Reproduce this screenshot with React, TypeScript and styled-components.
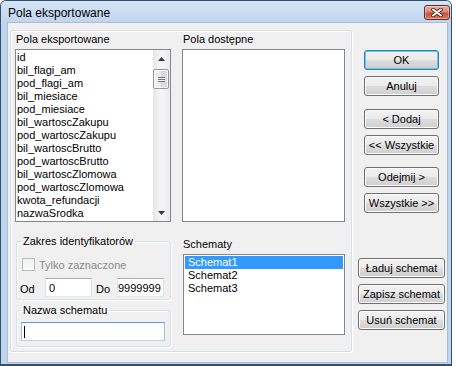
import React from 'react';
import styled, { createGlobalStyle, css } from 'styled-components';

const GlobalStyle = createGlobalStyle`
  html, body {
    margin: 0;
    padding: 0;
    background: #fff;
  }
  body {
    font-family: "Liberation Sans", Arial, sans-serif;
    font-size: 11px;
    color: #000;
  }
  * {
    box-sizing: border-box;
  }
`;

const EXPORTED_FIELDS = [
  'id',
  'bil_flagi_am',
  'pod_flagi_am',
  'bil_miesiace',
  'pod_miesiace',
  'bil_wartoscZakupu',
  'pod_wartoscZakupu',
  'bil_wartoscBrutto',
  'pod_wartoscBrutto',
  'bil_wartoscZlomowa',
  'pod_wartoscZlomowa',
  'kwota_refundacji',
  'nazwaSrodka',
];

const SCHEMAS = ['Schemat1', 'Schemat2', 'Schemat3'];

const Window = styled.div`
  width: 452px;
  height: 366px;
  display: flex;
  flex-direction: column;
  background: #bfd5ee;
  border: 1px solid #34506e;
  border-bottom-width: 2px;
  border-radius: 6px 6px 0 0;
`;

const TitleBar = styled.div`
  height: 22px;
  flex: none;
  display: flex;
  align-items: flex-start;
  padding: 0 1px 0 7px;
  background: linear-gradient(#d4e4f6, #bfd5ee);
  border-radius: 5px 5px 0 0;
`;

const Title = styled.div`
  flex: 1;
  font-size: 12px;
  line-height: 22px;
  padding-top: 1px;
`;

const CloseButton = styled.div`
  width: 26px;
  height: 15px;
  margin-top: 4px;
  border: 1px solid #6b2a1f;
  border-radius: 3px;
  background: linear-gradient(#eab0a3 0%, #d9887a 45%, #c4523c 55%, #d27a66 100%);
  box-shadow: inset 0 0 0 1px rgba(255, 255, 255, 0.35);
  display: flex;
  align-items: center;
  justify-content: center;
`;

const Client = styled.div`
  flex: 1;
  margin: 0 4px 2px 7px;
  background: #f0f0f0;
  box-shadow: 0 0 0 1px #a9bdd4;
  display: flex;
  align-items: flex-start;
`;

const groupBorder = css`
  border: 1px solid #d5dfe5;
  border-radius: 3px;
  box-shadow: inset 1px 1px 0 #fff, 1px 1px 0 #fff;
`;

const MainPanel = styled.div`
  ${groupBorder};
  width: 342px;
  margin: 7px 0 0 2px;
  padding: 2px 6px 4px 4px;
  display: flex;
  gap: 11px;
`;

const Column = styled.div<{ $width: number }>`
  width: ${(p) => p.$width}px;
  display: flex;
  flex-direction: column;
`;

const FieldLabel = styled.div<{ $top?: number }>`
  height: 13px;
  line-height: 13px;
  padding-left: 1px;
  margin-top: ${(p) => p.$top ?? 0}px;
  margin-bottom: 3px;
  white-space: nowrap;
`;

const ListBox = styled.div<{ $height: number; $inset?: number }>`
  height: ${(p) => p.$height}px;
  margin-left: ${(p) => p.$inset ?? 0}px;
  border: 1px solid #828790;
  background: #fff;
  display: flex;
  overflow: hidden;
`;

const ListItems = styled.div`
  flex: 1;
  padding: 1px;
  overflow: hidden;
`;

const ListItem = styled.div<{ $selected?: boolean; $pad: number }>`
  height: 13px;
  line-height: 13px;
  padding-left: ${(p) => p.$pad}px;
  white-space: nowrap;
  ${(p) =>
    p.$selected &&
    css`
      background: #3399ff;
      color: #fff;
    `}
`;

const ScrollBar = styled.div`
  width: 17px;
  flex: none;
  display: flex;
  flex-direction: column;
  background: linear-gradient(to right, #e6e6e6, #f4f4f4 40%, #f4f4f4 60%, #ececec);
`;

const ScrollArrow = styled.div`
  height: 17px;
  flex: none;
  display: flex;
  align-items: center;
  justify-content: center;
`;

const ScrollThumb = styled.div`
  height: 20px;
  margin: 2px 1px 0 0;
  border: 1px solid #979797;
  border-radius: 2px;
  background: linear-gradient(to right, #f3f3f3, #e8e8e8 50%, #d9d9d9 50%, #dcdcdc);
  box-shadow: inset 0 0 0 1px rgba(255, 255, 255, 0.8);
  display: flex;
  align-items: center;
  justify-content: center;
`;

const ThumbGrip = styled.div`
  width: 7px;
  height: 5px;
  background: repeating-linear-gradient(to bottom, #6f6f6f 0 1px, #f6f6f6 1px 2px);
`;

const ScrollTrack = styled.div`
  flex: 1;
`;

const GroupBox = styled.fieldset<{ $top: number; $bottom: number }>`
  ${groupBorder};
  margin: ${(p) => p.$top}px 0 0 1px;
  width: 155px;
  padding: 0 0 ${(p) => p.$bottom}px 0;
  min-width: 0;
`;

const GroupCaption = styled.legend`
  margin-left: 4px;
  padding: 0 2px;
  line-height: 13px;
  font-size: 11px;
`;

const CheckRow = styled.div`
  display: flex;
  align-items: center;
  gap: 4px;
  margin: 10px 0 0 5px;
  height: 13px;
  color: #8a8a8a;
`;

const CheckBox = styled.div`
  width: 13px;
  height: 13px;
  border: 1px solid #bcbcbc;
  background: linear-gradient(#f0f0f0, #fafafa);
`;

const RangeRow = styled.div`
  display: flex;
  align-items: flex-end;
  margin-top: 7px;
`;

const RangeLabel = styled.div<{ $width: number; $pad: number }>`
  width: ${(p) => p.$width}px;
  padding-left: ${(p) => p.$pad}px;
  line-height: 13px;
  padding-bottom: 1px;
`;

const TextBox = styled.div<{ $width: number; $pad: number; $focused?: boolean; $left?: number; $top?: number }>`
  width: ${(p) => p.$width}px;
  height: 19px;
  margin: ${(p) => p.$top ?? 0}px 0 0 ${(p) => p.$left ?? 0}px;
  padding-left: ${(p) => p.$pad}px;
  background: #fff;
  border: 1px solid;
  border-color: #abadb3 #dbdfe6 #e3e9ef #e2e3ea;
  display: flex;
  align-items: center;
  overflow: hidden;
  white-space: nowrap;
  ${(p) =>
    p.$focused &&
    css`
      border-color: #569de5 #98c1ea #b7d4f0 #98c1ea;
    `}
`;

const Caret = styled.span`
  width: 1px;
  height: 12px;
  background: #000;
  margin-left: 2px;
`;

const ButtonColumn = styled.div`
  width: 94px;
  padding: 27px 0 0 5px;
  display: flex;
  flex-direction: column;
  align-items: center;
`;

const ButtonGroup = styled.div<{ $top?: number }>`
  display: flex;
  flex-direction: column;
  gap: 6px;
  margin-top: ${(p) => p.$top ?? 0}px;
`;

const Button = styled.div<{ $width: number; $default?: boolean }>`
  width: ${(p) => p.$width}px;
  height: 20px;
  border: 1px solid #707070;
  border-radius: 3px;
  background: linear-gradient(#f2f2f2 0%, #ebebeb 50%, #dddddd 50%, #cfcfcf 100%);
  box-shadow: inset 0 0 0 1px #fcfcfc;
  display: flex;
  align-items: center;
  justify-content: center;
  white-space: nowrap;
  ${(p) =>
    p.$default &&
    css`
      border-color: #3c7fb1;
      box-shadow: inset 0 0 0 1px #62c6f5;
    `}
`;

function Arrow({ down }: { down?: boolean }) {
  return (
    <svg width="7" height="4" viewBox="0 0 7 4">
      <path d={down ? 'M0 0H7L3.5 4Z' : 'M0 4H7L3.5 0Z'} fill="#3c3c3c" />
    </svg>
  );
}

function CloseGlyph() {
  return (
    <svg width="12" height="9" viewBox="0 0 12 9">
      <path d="M2 1.5L10 7.5M10 1.5L2 7.5" stroke="#5a2016" strokeWidth="3.6" strokeLinecap="round" />
      <path d="M2 1.5L10 7.5M10 1.5L2 7.5" stroke="#fff" strokeWidth="2" strokeLinecap="round" />
    </svg>
  );
}

export default function App() {
  return (
    <>
      <GlobalStyle />
      <Window>
        <TitleBar>
          <Title>Pola eksportowane</Title>
          <CloseButton>
            <CloseGlyph />
          </CloseButton>
        </TitleBar>
        <Client>
          <MainPanel>
            <Column $width={156}>
              <FieldLabel>Pola eksportowane</FieldLabel>
              <ListBox $height={173}>
                <ListItems>
                  {EXPORTED_FIELDS.map((name) => (
                    <ListItem key={name} $pad={0}>
                      {name}
                    </ListItem>
                  ))}
                </ListItems>
                <ScrollBar>
                  <ScrollArrow>
                    <Arrow />
                  </ScrollArrow>
                  <ScrollThumb>
                    <ThumbGrip />
                  </ScrollThumb>
                  <ScrollTrack />
                  <ScrollArrow>
                    <Arrow down />
                  </ScrollArrow>
                </ScrollBar>
              </ListBox>
              <GroupBox $top={13} $bottom={2}>
                <GroupCaption>Zakres identyfikatorów</GroupCaption>
                <CheckRow>
                  <CheckBox />
                  Tylko zaznaczone
                </CheckRow>
                <RangeRow>
                  <RangeLabel $width={28} $pad={3}>
                    Od
                  </RangeLabel>
                  <TextBox $width={47} $pad={3}>
                    0
                  </TextBox>
                  <RangeLabel $width={25} $pad={4}>
                    Do
                  </RangeLabel>
                  <TextBox $width={47} $pad={0}>
                    9999999
                  </TextBox>
                </RangeRow>
              </GroupBox>
              <GroupBox $top={4} $bottom={5}>
                <GroupCaption>Nazwa schematu</GroupCaption>
                <TextBox $width={144} $pad={0} $left={4} $top={5} $focused>
                  <Caret />
                </TextBox>
              </GroupBox>
            </Column>
            <Column $width={163}>
              <FieldLabel>Pola dostępne</FieldLabel>
              <ListBox $height={173} />
              <FieldLabel $top={16}>Schematy</FieldLabel>
              <ListBox $height={81} $inset={1}>
                <ListItems>
                  {SCHEMAS.map((name, i) => (
                    <ListItem key={name} $pad={3} $selected={i === 0}>
                      {name}
                    </ListItem>
                  ))}
                </ListItems>
              </ListBox>
            </Column>
          </MainPanel>
          <ButtonColumn>
            <ButtonGroup>
              <Button $width={75} $default>
                OK
              </Button>
              <Button $width={75}>Anuluj</Button>
            </ButtonGroup>
            <ButtonGroup $top={13}>
              <Button $width={75}>&lt; Dodaj</Button>
              <Button $width={75}>&lt;&lt; Wszystkie</Button>
            </ButtonGroup>
            <ButtonGroup $top={12}>
              <Button $width={75}>Odejmij &gt;</Button>
              <Button $width={75}>Wszystkie &gt;&gt;</Button>
            </ButtonGroup>
            <ButtonGroup $top={45}>
              <Button $width={87}>Ładuj schemat</Button>
              <Button $width={87}>Zapisz schemat</Button>
              <Button $width={87}>Usuń schemat</Button>
            </ButtonGroup>
          </ButtonColumn>
        </Client>
      </Window>
    </>
  );
}
